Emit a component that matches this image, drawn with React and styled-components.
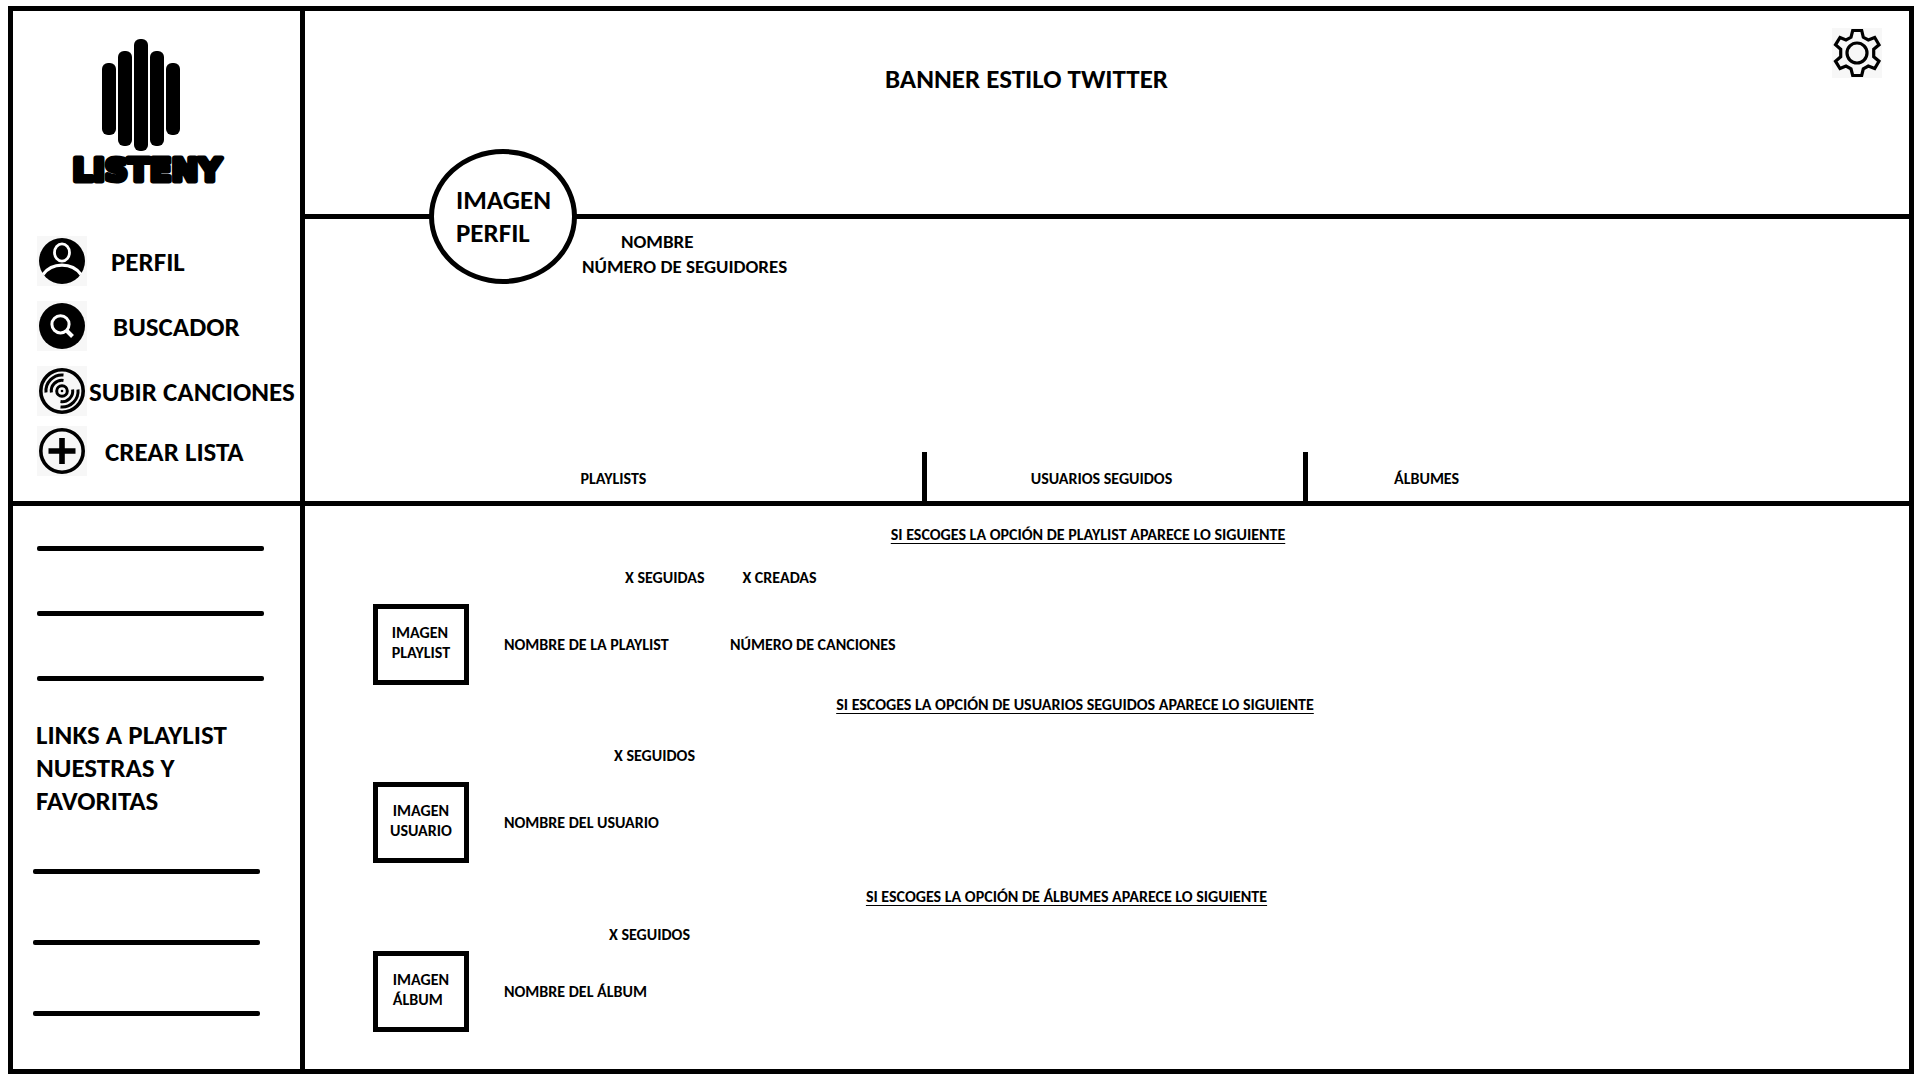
import React from "react";
import styled, { createGlobalStyle } from "styled-components";

const line = "5px solid #000";

const GlobalStyle = createGlobalStyle`
  *, *::before, *::after { box-sizing: border-box; }
  body {
    margin: 0;
    background: #fff;
    color: #000;
    font-family: Carlito, Lato, "Open Sans", sans-serif;
    font-weight: 700;
  }
  h1, h2, h3, p, ul { margin: 0; padding: 0; font: inherit; }
  ul { list-style: none; }
  a { color: inherit; text-decoration: none; }
  button { border: 0; padding: 0; background: none; color: inherit; font: inherit; cursor: pointer; }
`;

const Page = styled.div`
  display: flex;
  min-height: 100vh;
  padding: 6px 6px 6px 8px;
`;

const Frame = styled.div`
  flex: 1;
  display: grid;
  grid-template-columns: 292px minmax(0, 1fr);
  grid-template-rows: auto 1fr;
  border: ${line};
`;

const SideTop = styled.aside`
  display: flex;
  flex-direction: column;
  padding: 25px 0;
  border-right: ${line};
  border-bottom: ${line};
`;

const Logo = styled.svg`
  display: block;
  width: 170px;
  height: 160px;
  margin: 0 0 40px 49px;
  overflow: visible;
`;

const NavRow = styled.a`
  display: flex;
  align-items: center;
  gap: ${(p) => p.$gap}px;
  margin-top: ${(p) => p.$space}px;
  padding-left: 24px;
  font-size: 27px;
  line-height: 33px;
  white-space: nowrap;
`;

const Icon = styled.svg`
  flex: none;
  display: block;
  width: 50px;
  height: 50px;
  background: #f7f7f7;
`;

const MainTop = styled.header`
  display: flex;
  flex-direction: column;
  border-bottom: ${line};
`;

const Banner = styled.div`
  display: grid;
  grid-template-columns: 1fr auto;
  align-items: start;
  min-height: 208px;
  padding: 17px 27px 17px 0;
  border-bottom: ${line};
`;

const BannerTitle = styled.h1`
  padding: 34px 0 0 0;
  margin-right: 84px;
  text-align: center;
  font-size: 27px;
  line-height: 33px;
`;

const Profile = styled.div`
  display: flex;
  align-items: flex-start;
  gap: 5px;
  padding-left: 124px;
`;

const Avatar = styled.div`
  position: relative;
  display: flex;
  align-items: center;
  width: 148px;
  height: 135px;
  margin-top: -70px;
  padding: 0 0 2px 22px;
  border: ${line};
  border-radius: 50%;
  background: #fff;
  font-size: 27px;
  line-height: 33px;
`;

const ProfileText = styled.div`
  padding-top: 10px;
  font-size: 19px;
  line-height: 25px;
`;

const ProfileName = styled.h2`
  padding-left: 39px;
`;

const Tabs = styled.nav`
  display: grid;
  grid-template-columns: 622fr 381fr 601fr;
  min-height: 49px;
  margin-top: auto;
`;

const Tab = styled.button`
  padding: 4px ${(p) => p.$right || 0}px 0 ${(p) => p.$left || 0}px;
  border-right: ${line};
  border-radius: 0;
  text-align: ${(p) => (p.$left ? "left" : "center")};
  font-size: 16px;
  line-height: 20px;
  &:last-child { border-right: 0; }
`;

const SideBottom = styled.aside`
  padding-top: 40px;
  border-right: ${line};
`;

const LinkList = styled.ul`
  display: grid;
  gap: ${(p) => p.$gap}px;
  padding: 0 36px 0 ${(p) => p.$indent}px;
`;

const LinkRule = styled.a`
  display: block;
  width: 227px;
  height: 5px;
  border-radius: 2px;
  background: #000;
`;

const LinksTitle = styled.h2`
  padding: 0 23px;
  margin: 37px 0 52px;
  font-size: 27px;
  line-height: 33px;
`;

const Content = styled.main`
  padding: 19px 0 37px;
`;

const Section = styled.section`
  display: flex;
  flex-direction: column;
  margin-top: ${(p) => p.$top || 0}px;
`;

const SectionTitle = styled.h3`
  padding-right: ${(p) => p.$inset}px;
  text-align: center;
  text-decoration: underline;
  text-underline-offset: 3px;
  text-decoration-thickness: 1px;
  font-size: 16px;
  line-height: 20px;
`;

const Filters = styled.div`
  display: flex;
  gap: 38px;
  margin: ${(p) => p.$above}px 0 ${(p) => p.$below}px;
  padding-left: ${(p) => p.$indent}px;
  font-size: 16px;
  line-height: 20px;
`;

const Item = styled.div`
  display: flex;
  align-items: center;
  padding-left: 68px;
  font-size: 16px;
  line-height: 20px;
`;

const Cover = styled.div`
  display: flex;
  align-items: center;
  justify-content: center;
  width: 96px;
  height: 81px;
  padding-bottom: 3px;
  margin-right: 35px;
  border: ${line};
  text-align: ${(p) => p.$align || "left"};
`;

const ItemName = styled.p`
  min-width: 226px;
`;

const bars = [
  [35, 27, 72],
  [51, 15, 95],
  [67, 3, 112],
  [83, 15, 95],
  [99, 27, 72],
];

function ListenyLogo() {
  return (
    <Logo viewBox="-5 0 170 160" role="img" aria-label="Listeny">
      {bars.map(([x, y, h]) => (
        <rect key={x} x={x} y={y} width="14" height={h} rx="6" />
      ))}
      <text
        x="80"
        y="145"
        textAnchor="middle"
        fontFamily="DejaVu Sans, sans-serif"
        fontWeight="700"
        fontSize="32"
        stroke="#000"
        strokeWidth="5"
        strokeLinejoin="round"
      >
        LISTENY
      </text>
    </Logo>
  );
}

function PersonIcon() {
  return (
    <Icon viewBox="0 0 50 50" fill="none" aria-hidden="true">
      <circle cx="25" cy="25" r="23" fill="#000" />
      <ellipse cx="25" cy="16.5" rx="7.5" ry="8.7" stroke="#fff" strokeWidth="2.8" />
      <path d="M6 38.5C15 26 35 26 44 38.5" stroke="#fff" strokeWidth="3.2" />
    </Icon>
  );
}

function SearchIcon() {
  return (
    <Icon viewBox="0 0 50 50" fill="none" aria-hidden="true">
      <circle cx="25" cy="25" r="23" fill="#000" />
      <circle cx="23.5" cy="23.3" r="8.6" stroke="#fff" strokeWidth="3" />
      <path d="M29.5 29.5L35.5 35.5" stroke="#fff" strokeWidth="4" />
    </Icon>
  );
}

function DiscIcon() {
  return (
    <Icon viewBox="0 0 50 50" fill="none" stroke="#000" strokeWidth="3" aria-hidden="true">
      <circle cx="25" cy="25" r="21.2" strokeWidth="3.6" />
      <circle cx="25" cy="25" r="5.3" />
      <circle cx="25" cy="25" r="1.3" fill="#000" stroke="none" />
      <path d="M14.4 26.5A10.6 10.6 0 0 1 26.5 14.4M9 26.5A16 16 0 0 1 26.5 9" />
      <path d="M35.6 23.5A10.6 10.6 0 0 1 23.5 35.6M41 23.5A16 16 0 0 1 23.5 41" />
    </Icon>
  );
}

function PlusIcon() {
  return (
    <Icon viewBox="0 0 50 50" fill="none" stroke="#000" aria-hidden="true">
      <circle cx="25" cy="25" r="21.2" strokeWidth="3.6" />
      <path d="M25 12V38M11.5 25H38.5" strokeWidth="5.6" />
    </Icon>
  );
}

function GearIcon() {
  return (
    <Icon viewBox="0 0 50 50" fill="none" stroke="#000" strokeWidth="3.2" aria-hidden="true">
      <path d="M20.7 2.5H29.7L31.3 9.3L36.3 12L42.7 9.5L47 16.8L41.7 21.3V28.7L47 33.2L42.7 40.5L36.3 38L31.3 40.9L29.7 47.5H20.7L19 40.9L14 38L8 40.5L3.5 33.2L8.7 28.7V21.3L3.5 16.8L8 9.5L14 12L19 9.3Z" />
      <circle cx="25" cy="25" r="10" />
    </Icon>
  );
}

const navItems = [
  { label: "PERFIL", icon: PersonIcon, gap: 24, space: 0 },
  { label: "BUSCADOR", icon: SearchIcon, gap: 26, space: 15 },
  { label: "SUBIR CANCIONES", icon: DiscIcon, gap: 2, space: 15 },
  { label: "CREAR LISTA", icon: PlusIcon, gap: 18, space: 10 },
];

const sections = [
  {
    title: "SI ESCOGES LA OPCIÓN DE PLAYLIST APARECE LO SIGUIENTE",
    top: 0, inset: 38, above: 23, below: 16, indent: 320,
    filters: ["X SEGUIDAS", "X CREADAS"],
    cover: ["IMAGEN", "PLAYLIST"],
    name: "NOMBRE DE LA PLAYLIST",
    detail: "NÚMERO DE CANCIONES",
  },
  {
    title: "SI ESCOGES LA OPCIÓN DE USUARIOS SEGUIDOS APARECE LO SIGUIENTE",
    top: 10, inset: 64, above: 31, below: 16, indent: 309,
    filters: ["X SEGUIDOS"],
    cover: ["IMAGEN", "USUARIO"],
    align: "center",
    name: "NOMBRE DEL USUARIO",
  },
  {
    title: "SI ESCOGES LA OPCIÓN DE ÁLBUMES APARECE LO SIGUIENTE",
    top: 24, inset: 81, above: 18, below: 6, indent: 304,
    filters: ["X SEGUIDOS"],
    cover: ["IMAGEN", "ÁLBUM"],
    name: "NOMBRE DEL ÁLBUM",
  },
];

function Links({ from, gap, indent }) {
  return (
    <LinkList $gap={gap} $indent={indent}>
      {[0, 1, 2].map((i) => (
        <li key={i}>
          <LinkRule href="#" aria-label={`Playlist ${from + i}`} />
        </li>
      ))}
    </LinkList>
  );
}

export default function App() {
  return (
    <>
      <GlobalStyle />
      <Page>
        <Frame>
          <SideTop>
            <ListenyLogo />
            <nav>
              {navItems.map(({ label, icon: Glyph, gap, space }) => (
                <NavRow key={label} href="#" $gap={gap} $space={space}>
                  <Glyph />
                  {label}
                </NavRow>
              ))}
            </nav>
          </SideTop>

          <MainTop>
            <Banner>
              <BannerTitle>BANNER ESTILO TWITTER</BannerTitle>
              <button type="button" aria-label="Ajustes">
                <GearIcon />
              </button>
            </Banner>
            <Profile>
              <Avatar>
                <p>
                  IMAGEN
                  <br />
                  PERFIL
                </p>
              </Avatar>
              <ProfileText>
                <ProfileName>NOMBRE</ProfileName>
                <p>NÚMERO DE SEGUIDORES</p>
              </ProfileText>
            </Profile>
            <Tabs>
              <Tab type="button">PLAYLISTS</Tab>
              <Tab type="button" $right={27}>USUARIOS SEGUIDOS</Tab>
              <Tab type="button" $left={86}>ÁLBUMES</Tab>
            </Tabs>
          </MainTop>

          <SideBottom>
            <Links from={1} gap={60} indent={24} />
            <LinksTitle>
              LINKS A PLAYLIST
              <br />
              NUESTRAS Y
              <br />
              FAVORITAS
            </LinksTitle>
            <Links from={4} gap={66} indent={20} />
          </SideBottom>

          <Content>
            {sections.map((s) => (
              <Section key={s.title} $top={s.top}>
                <SectionTitle $inset={s.inset}>{s.title}</SectionTitle>
                <Filters $above={s.above} $below={s.below} $indent={s.indent}>
                  {s.filters.map((f) => (
                    <button type="button" key={f}>{f}</button>
                  ))}
                </Filters>
                <Item>
                  <Cover $align={s.align}>
                    <p>
                      {s.cover[0]}
                      <br />
                      {s.cover[1]}
                    </p>
                  </Cover>
                  <ItemName>{s.name}</ItemName>
                  {s.detail && <p>{s.detail}</p>}
                </Item>
              </Section>
            ))}
          </Content>
        </Frame>
      </Page>
    </>
  );
}
